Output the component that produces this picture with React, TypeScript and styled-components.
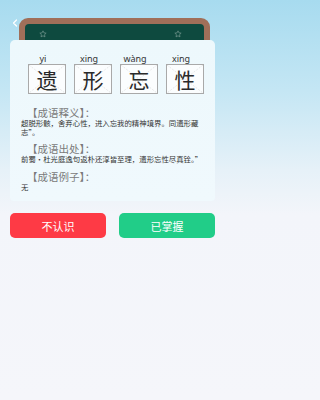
import React from "react";
import styled, { createGlobalStyle } from "styled-components";

const Global = createGlobalStyle`
  html, body {
    margin: 0;
    padding: 0;
  }
  body {
    width: 225px;
    height: 400px;
    overflow: hidden;
    background: linear-gradient(180deg, #a7dbef 0px, #c4e6f4 90px, #e6f1f8 170px, #f3f5fa 215px, #f5f6fa 400px);
    font-family: "Noto Sans CJK SC", "Noto Sans", sans-serif;
  }
`;

const Page = styled.div`
  padding: 0 10px;
  box-sizing: border-box;
  width: 225px;
`;

const Header = styled.div`
  display: flex;
  align-items: flex-start;
  padding: 18px 5px 0 2px;
  gap: 1px;
`;

const Back = styled.svg`
  width: 6px;
  height: 8px;
  margin-top: 1px;
  flex: none;
`;

const Board = styled.div`
  flex: 1;
  height: 22px;
  background: #a06f59;
  border-radius: 9px 9px 0 0;
  padding: 6px 6px 0 6px;
  box-sizing: border-box;
`;

const BoardInner = styled.div`
  height: 16px;
  background: #0e4a3f;
  border-radius: 4px 4px 0 0;
  display: flex;
  justify-content: space-between;
  align-items: flex-start;
  padding: 6px 22px 0 14px;
  box-sizing: border-box;
`;

const Star = styled.svg`
  width: 8px;
  height: 8px;
`;

const Card = styled.div`
  background: linear-gradient(180deg, #edf8fc 0%, #f0f9fd 100%);
  border-radius: 5px 5px 4px 4px;
  padding: 14px 10px 12px 11px;
  box-sizing: border-box;
  height: 161px;
`;

const Chars = styled.div`
  display: flex;
  gap: 8px;
  padding-left: 7px;
`;

const Cell = styled.div`
  display: flex;
  flex-direction: column;
  align-items: center;
  width: 38px;
`;

const Pinyin = styled.div`
  font-family: "Noto Sans", "Liberation Sans", sans-serif;
  font-size: 9px;
  line-height: 10px;
  color: #333;
  margin-right: 8px;
  white-space: nowrap;
`;

const Box = styled.div`
  position: relative;
  width: 38px;
  height: 30px;
  box-sizing: border-box;
  border: 1px solid #a9a9a9;
  background: #fbfdfe;
  display: flex;
  align-items: center;
  justify-content: center;
`;

const Grid = styled.svg`
  position: absolute;
  inset: 0;
  width: 100%;
  height: 100%;
`;

const Han = styled.span`
  position: relative;
  font-size: 21px;
  line-height: 1;
  color: #2a2a2a;
`;

const Section = styled.div<{ $first?: boolean }>`
  margin-top: ${(p) => (p.$first ? "12px" : "6px")};
`;

const Heading = styled.div`
  font-size: 10.5px;
  line-height: 13px;
  color: #7a7a7a;
  padding-left: 6px;
`;

const Body = styled.div`
  font-size: 7.4px;
  line-height: 8.5px;
  color: #333;
  padding-right: 4px;
`;

const Buttons = styled.div`
  display: grid;
  grid-template-columns: 96px 96px;
  justify-content: space-between;
  margin-top: 12px;
`;

const Btn = styled.button<{ $bg: string }>`
  height: 25px;
  border: none;
  border-radius: 5px;
  background: ${(p) => p.$bg};
  color: #fff;
  font-family: "Noto Sans CJK SC", sans-serif;
  font-size: 11px;
  padding: 0;
`;

const StarIcon = () => (
  <Star viewBox="0 0 24 24">
    <path
      d="M12 2.5l2.9 6.1 6.6.8-4.9 4.6 1.3 6.6L12 17.3l-5.9 3.3 1.3-6.6-4.9-4.6 6.6-.8z"
      fill="none"
      stroke="#7a9c94"
      strokeWidth="2"
      strokeLinejoin="round"
    />
  </Star>
);

const chars = [
  { py: "yi", h: "遗" },
  { py: "xing", h: "形" },
  { py: "wàng", h: "忘" },
  { py: "xing", h: "性" },
];

const sections = [
  {
    t: "【成语释义】：",
    b: "超脱形骸，舍弃心性，进入忘我的精神境界。同遗形藏志”。",
  },
  {
    t: "【成语出处】：",
    b: "前蜀·杜光庭逸句返朴还淳皆至理，遗形忘性尽真铨。”",
  },
  { t: "【成语例子】：", b: "无" },
];

export default function App() {
  return (
    <>
      <Global />
      <Page>
        <Header>
          <Back viewBox="0 0 6 8">
            <path d="M4.5 1L1.5 4l3 3" fill="none" stroke="#fff" strokeWidth="1.2" strokeLinecap="round" strokeLinejoin="round" />
          </Back>
          <Board>
            <BoardInner>
              <StarIcon />
              <StarIcon />
            </BoardInner>
          </Board>
        </Header>
        <Card>
          <Chars>
            {chars.map((c, i) => (
              <Cell key={i}>
                <Pinyin>{c.py}</Pinyin>
                <Box>
                  <Grid viewBox="0 0 38 30" preserveAspectRatio="none">
                    <line x1="0" y1="0" x2="38" y2="30" stroke="#d4d4d4" strokeWidth="0.6" strokeDasharray="2 1.5" />
                    <line x1="38" y1="0" x2="0" y2="30" stroke="#d4d4d4" strokeWidth="0.6" strokeDasharray="2 1.5" />
                  </Grid>
                  <Han>{c.h}</Han>
                </Box>
              </Cell>
            ))}
          </Chars>
          {sections.map((s, i) => (
            <Section key={i} $first={i === 0}>
              <Heading>{s.t}</Heading>
              <Body>{s.b}</Body>
            </Section>
          ))}
        </Card>
        <Buttons>
          <Btn $bg="#fe3a45">不认识</Btn>
          <Btn $bg="#21cd88">已掌握</Btn>
        </Buttons>
      </Page>
    </>
  );
}
